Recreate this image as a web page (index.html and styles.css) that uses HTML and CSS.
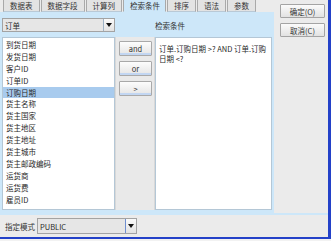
FILE: index.html
```html
<!DOCTYPE html>
<html lang="zh">
<head>
<meta charset="utf-8">
<link rel="stylesheet" href="styles.css">
</head>
<body>
<div class="win">
  <div class="main">
    <div class="left">
      <div class="tabs">
        <div class="tab">数据表</div>
        <div class="tab">数据字段</div>
        <div class="tab">计算列</div>
        <div class="tab sel">检索条件</div>
        <div class="tab">排序</div>
        <div class="tab">语法</div>
        <div class="tab">参数</div>
      </div>
      <div class="panel">
        <div class="panel-head">
          <div class="combo table-combo">
            <span class="val">订单</span>
            <span class="arrow"><svg width="6" height="4" viewBox="0 0 6 4"><path d="M0 0H6L3 4Z" fill="#111"/></svg></span>
          </div>
          <div class="cond-label">检索条件</div>
        </div>
        <div class="panel-body">
          <ul class="fields">
            <li>到货日期</li>
            <li>发货日期</li>
            <li>客户ID</li>
            <li>订单ID</li>
            <li class="hl">订购日期</li>
            <li>货主名称</li>
            <li>货主国家</li>
            <li>货主地区</li>
            <li>货主地址</li>
            <li>货主城市</li>
            <li>货主邮政编码</li>
            <li>运货商</li>
            <li>运货费</li>
            <li>雇员ID</li>
          </ul>
          <div class="ops">
            <button class="op">and</button>
            <button class="op">or</button>
            <button class="op">&gt;</button>
          </div>
          <div class="cond-text">订单.订购日期 &gt;? AND 订单.订购<br>日期 &lt;?</div>
        </div>
      </div>
    </div>
    <div class="side">
      <button class="dlg">确定(O)</button>
      <button class="dlg">取消(C)</button>
    </div>
  </div>
  <div class="bottom">
    <span class="mode-label">指定模式</span>
    <div class="combo mode-combo">
      <span class="val">PUBLIC</span>
      <span class="arrow"><svg width="6" height="4" viewBox="0 0 6 4"><path d="M0 0H6L3 4Z" fill="#111"/></svg></span>
    </div>
  </div>
</div>
</body>
</html>
```
FILE: styles.css
```css
* { box-sizing: border-box; }
html, body { margin: 0; padding: 0; }
body {
  background: #f2f2f2;
  font-family: "Noto Sans CJK SC", "Liberation Sans", sans-serif;
  font-size: 7.5px;
  color: #2a2a2a;
  width: 331px;
  height: 241px;
  overflow: hidden;
}
.win {
  width: 331px;
  height: 239px;
  background: #ebebeb;
  border-right: 3px solid #2341c8;
  border-bottom: 2px solid #2341c8;
  display: flex;
  flex-direction: column;
}
.main {
  height: 213px;
  display: flex;
}
.left {
  width: 274px;
  display: flex;
  flex-direction: column;
}
.tabs {
  height: 12px;
  display: flex;
  gap: 1px;
  padding-left: 3px;
  background: #ebebeb;
}
.tab {
  height: 12px;
  padding: 0 6px;
  line-height: 11px;
  background: #e3e3e3;
  border: 1px solid #a9a9a9;
  border-top: none;
  border-bottom-color: #b9c9d6;
  color: #333;
  white-space: nowrap;
}
.tab.sel {
  background: #cde7f9;
  border-bottom-color: #cde7f9;
  padding: 0 5px 0 6px;
}
.panel {
  flex: 1;
  background: #cde7f9;
  padding: 6px 2px 3px 2px;
  display: flex;
  flex-direction: column;
}
.panel-head {
  height: 14px;
  display: flex;
  align-items: center;
}
.combo {
  display: flex;
  align-items: stretch;
  background: #e6e6e6;
  border: 1px solid #a3a3a3;
}
.combo .val {
  flex: 1;
  padding-left: 2px;
  display: flex;
  align-items: center;
}
.combo .arrow {
  width: 11px;
  display: flex;
  align-items: center;
  justify-content: center;
  background: linear-gradient(#fafafa, #e2e2e2);
  border-left: 1px solid #9fb3c6;
}
.table-combo {
  width: 113px;
  height: 14px;
}
.cond-label {
  margin-left: 40px;
  color: #333;
}
.panel-body {
  margin-top: 5px;
  height: 173px;
  display: flex;
}
.fields {
  list-style: none;
  margin: 0;
  padding: 1px 0 0 0;
  width: 113px;
  background: #fff;
  border: 1px solid #b4c7d6;
}
.fields li {
  height: 11.9px;
  line-height: 11.9px;
  padding-left: 3px;
  white-space: nowrap;
}
.fields li.hl {
  background: #a8cbee;
}
.ops {
  width: 40px;
  background: #e9e9e9;
  border-left: 1px solid #d8d8d8;
  border-right: 1px solid #d8d8d8;
  display: flex;
  flex-direction: column;
  align-items: flex-start;
  padding: 4px 0 0 3px;
  gap: 5px;
}
.op {
  width: 33px;
  height: 15px;
  padding: 0;
  font: inherit;
  color: #333;
  background: linear-gradient(#fdfdfd, #e4e4e4);
  border: 1px solid #a9a9a9;
  border-radius: 1px;
  box-shadow: inset 0 -2px 0 #c2d6f2;
}
.cond-text {
  flex: 1;
  background: #fff;
  border: 1px solid #b4c7d6;
  padding: 6px 3px;
  line-height: 9.5px;
  white-space: nowrap;
}
.side {
  flex: 1;
  display: flex;
  flex-direction: column;
  align-items: flex-start;
  padding: 4px 0 0 6px;
  gap: 5px;
}
.dlg {
  width: 45px;
  height: 14px;
  padding: 0;
  font: inherit;
  color: #333;
  background: linear-gradient(#fbfbfb, #e2e2e2);
  border: 1px solid #a4a4a4;
  border-radius: 1px;
}
.bottom {
  height: 24px;
  border-top: 2px solid #cde7f9;
  display: flex;
  align-items: center;
  padding-left: 5px;
  gap: 4px;
  background: #ebebeb;
}
.mode-label {
  width: 28px;
  white-space: nowrap;
  color: #333;
}
.mode-combo {
  width: 100px;
  height: 16px;
}
.mode-combo .arrow {
  border-left: 1px solid #6f8fd0;
}
```
